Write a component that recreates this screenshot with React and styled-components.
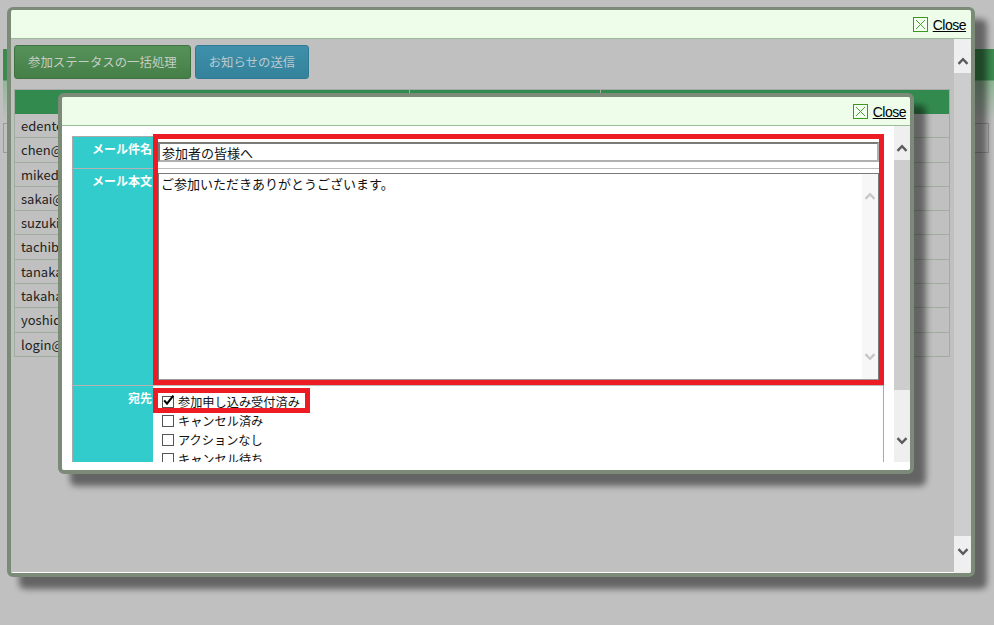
import React from 'react';
import styled, { createGlobalStyle } from 'styled-components';

const GlobalStyle = createGlobalStyle`
  html, body {
    margin: 0;
    padding: 0;
  }
  body {
    background: #c0c0c0;
    font-family: "Noto Sans CJK JP", "Noto Sans", sans-serif;
    overflow: hidden;
  }
`;

const members = [
  'edentest@example.jp',
  'chen@example.jp',
  'mikeda@example.jp',
  'sakai@example.jp',
  'suzuki@example.jp',
  'tachibana@example.jp',
  'tanaka@example.jp',
  'takahashi@example.jp',
  'yoshida@example.jp',
  'login@example.jp'
];

const recipients = [
  { label: '参加申し込み受付済み', checked: true },
  { label: 'キャンセル済み', checked: false },
  { label: 'アクションなし', checked: false },
  { label: 'キャンセル待ち', checked: false }
];

const Chevron = ({ dir, color }) => (
  <svg width="12" height="8" viewBox="0 0 12 8">
    <polyline
      points={dir === 'up' ? '1.5,6.8 6,2.2 10.5,6.8' : '1.5,1.2 6,5.8 10.5,1.2'}
      fill="none"
      stroke={color || '#5b5b5b'}
      strokeWidth="2.4"
    />
  </svg>
);

const CloseIcon = () => (
  <svg width="15" height="15" viewBox="0 0 15 15">
    <rect x="0.5" y="0.5" width="14" height="14" fill="#f3fff0" stroke="#3d981d" />
    <path d="M3 3 L12 12 M12 3 L3 12" stroke="#4ba22d" strokeWidth="1" />
  </svg>
);

const CheckMark = () => (
  <svg width="13" height="13" viewBox="0 0 13 13">
    <path d="M2.2 6.4 L5 9.6 L11.4 1.6" fill="none" stroke="#000" strokeWidth="2.1" />
  </svg>
);

const CloseLink = () => (
  <CloseWrap>
    <CloseIcon />
    <CloseText href="#close">Close</CloseText>
  </CloseWrap>
);

const Scrollbar = ({ thumb, width }) => (
  <ScrollTrack $w={width}>
    <ScrollButton $dir="up">
      <Chevron dir="up" />
    </ScrollButton>
    <ScrollThumb $h={thumb} />
    <ScrollRest>
      <ScrollButton $dir="down">
        <Chevron dir="down" />
      </ScrollButton>
    </ScrollRest>
  </ScrollTrack>
);

export default function App() {
  return (
    <>
      <GlobalStyle />
      <Screen>
        <BackPage>
          <BackBar />
          <BackField />
        </BackPage>

        <Dialog $left={7} $top={7} $w={968} $h={570} $bt={3}>
          <DialogHeader $pr={5}>
            <CloseLink />
          </DialogHeader>
          <DialogBody>
            <OuterMain>
              <Toolbar>
                <ActionButton $variant="green">参加ステータスの一括処理</ActionButton>
                <ActionButton $variant="blue">お知らせの送信</ActionButton>
              </Toolbar>
              <MemberTable>
                <HeadRow>
                  <HeadCell />
                  <HeadCell />
                  <HeadCell />
                </HeadRow>
                {members.map(m => (
                  <MemberRow key={m}>
                    <MemberCell>{m}</MemberCell>
                    <MemberCell />
                    <MemberCell />
                  </MemberRow>
                ))}
              </MemberTable>
            </OuterMain>
            <Scrollbar thumb={463} width={17} />
          </DialogBody>
        </Dialog>

        <Dialog $left={58} $top={93} $w={856} $h={381} $bt={4}>
          <DialogHeader $pr={4}>
            <CloseLink />
          </DialogHeader>
          <MailBody>
            <MailViewport>
              <MailContent>
                <FormGrid>
                  <FieldLabel $h={32}>メール件名</FieldLabel>
                  <FieldValue $h={32} $pad="5px 4px 0 5px">
                    <SubjectInput readOnly value="参加者の皆様へ" />
                  </FieldValue>

                  <FieldLabel $h={217}>メール本文</FieldLabel>
                  <FieldValue $h={217} $pad="4px 4px 4px 5px">
                    <TextBox>
                      <BodyText readOnly value="ご参加いただきありがとうございます。" />
                      <MiniBar>
                        <Chevron dir="up" color="#c8c8c8" />
                        <Chevron dir="down" color="#c8c8c8" />
                      </MiniBar>
                    </TextBox>
                  </FieldValue>

                  <FieldLabel $h={120}>宛先</FieldLabel>
                  <FieldValue $h={120} $pad="6px 0 0 9px">
                    {recipients.map(r => (
                      <CheckRow key={r.label}>
                        <CheckBox>{r.checked && <CheckMark />}</CheckBox>
                        <span>{r.label}</span>
                      </CheckRow>
                    ))}
                  </FieldValue>

                  <Highlight $left={80} $top={-3} $w={731} $h={251} />
                  <Highlight $left={80} $top={251} $w={157} $h={25} />
                </FormGrid>
              </MailContent>
              <Scrollbar thumb={230} width={16} />
            </MailViewport>
          </MailBody>
        </Dialog>
      </Screen>
    </>
  );
}

const Screen = styled.div`
  position: relative;
  width: 994px;
  height: 625px;
  overflow: hidden;
  background: #c0c0c0;
`;

const BackPage = styled.div`
  display: flex;
  flex-direction: column;
  padding: 49px 0 0 3px;
`;

const BackBar = styled.div`
  height: 72px;
  background: linear-gradient(
    #3d8a50 0,
    #3d8a50 31px,
    #8fb896 32px,
    #c0c0c0 72px
  );
`;

const BackField = styled.div`
  margin-top: 2px;
  width: 984px;
  height: 28px;
  border: 1px solid #9a9a9a;
`;

const Dialog = styled.section`
  position: absolute;
  left: ${p => p.$left}px;
  top: ${p => p.$top}px;
  width: ${p => p.$w}px;
  height: ${p => p.$h}px;
  box-sizing: border-box;
  border: 4px solid #7b8b78;
  border-top-width: ${p => p.$bt}px;
  border-radius: 6px;
  box-shadow: 12px 12px 6px rgba(0, 0, 0, 0.48);
  display: flex;
  flex-direction: column;
  overflow: hidden;
  background: #c0c0c0;
`;

const DialogHeader = styled.header`
  flex: none;
  height: 29px;
  box-sizing: border-box;
  background: #edfdea;
  border-bottom: 1px solid #9cbb9c;
  display: flex;
  justify-content: flex-end;
  align-items: center;
  padding-right: ${p => p.$pr}px;
`;

const CloseWrap = styled.div`
  display: flex;
  align-items: center;
  gap: 5px;
  margin-top: 1px;
`;

const CloseText = styled.a`
  font-family: "Liberation Sans", Arial, sans-serif;
  font-size: 14px;
  letter-spacing: -0.5px;
  color: #000;
  text-decoration: underline;
`;

const DialogBody = styled.div`
  flex: 1;
  display: flex;
  min-height: 0;
`;

const OuterMain = styled.div`
  flex: 1;
  min-width: 0;
  overflow: hidden;
  padding: 6px 4px 0 3px;
  border-bottom: 1px solid #fff;
`;

const Toolbar = styled.div`
  display: flex;
  gap: 4px;
`;

const ActionButton = styled.button`
  height: 34px;
  padding: 0 13px;
  border-radius: 3px;
  font-family: "Noto Sans CJK JP", sans-serif;
  font-size: 12.4px;
  cursor: pointer;
  border: 1px solid ${p => (p.$variant === 'green' ? '#3e723f' : '#2f7a93')};
  background: ${p =>
    p.$variant === 'green'
      ? 'linear-gradient(#55925a, #467f48)'
      : 'linear-gradient(#3e90aa, #34829c)'};
  color: ${p => (p.$variant === 'green' ? '#c6cdc5' : '#b9c9d0')};
`;

const MemberTable = styled.div`
  margin-top: 10px;
  border-left: 1px solid #9fae9c;
  border-right: 1px solid #9fae9c;
`;

const HeadRow = styled.div`
  display: grid;
  grid-template-columns: 394px 191px 1fr;
  height: 24px;
  border-top: 1px solid #a8a8a8;
  background: #338a4f;
`;

const HeadCell = styled.div`
  & + & {
    border-left: 1px solid #a8a8a8;
  }
`;

const MemberRow = styled.div`
  display: grid;
  grid-template-columns: 394px 191px 1fr;
  height: 24.3px;
  box-sizing: border-box;
  border-bottom: 1px solid #9fae9c;
`;

const MemberCell = styled.div`
  padding-left: 6px;
  font-size: 13px;
  line-height: 23px;
  color: #222;
  white-space: nowrap;
  overflow: hidden;
  & + & {
    border-left: 1px solid #9fae9c;
  }
`;

const ScrollTrack = styled.div`
  flex: none;
  width: ${p => p.$w}px;
  display: flex;
  flex-direction: column;
  background: #efefef;
`;

const ScrollButton = styled.div`
  height: 34px;
  box-sizing: border-box;
  display: flex;
  justify-content: center;
  align-items: ${p => (p.$dir === 'up' ? 'flex-end' : 'flex-start')};
  padding: ${p => (p.$dir === 'up' ? '0 0 8px' : '9px 0 0')};
`;

const ScrollThumb = styled.div`
  height: ${p => p.$h}px;
  background: #cdcdcd;
`;

const ScrollRest = styled.div`
  flex: 1;
  display: flex;
  flex-direction: column;
  justify-content: flex-end;
`;

const MailBody = styled.div`
  flex: 1;
  min-height: 0;
  background: #fff;
  padding: 0 0 8px 10px;
  display: flex;
`;

const MailViewport = styled.div`
  flex: 1;
  display: flex;
  min-height: 0;
  overflow: hidden;
`;

const MailContent = styled.div`
  flex: 1;
  min-width: 0;
  overflow: hidden;
  padding-top: 10px;
`;

const FormGrid = styled.div`
  position: relative;
  width: 812px;
  box-sizing: border-box;
  display: grid;
  grid-template-columns: 80px 1fr;
  border-top: 1px solid #aaa;
  border-left: 1px solid #aaa;
  border-right: 1px solid #aaa;
`;

const FieldLabel = styled.div`
  height: ${p => p.$h}px;
  box-sizing: border-box;
  background: #33cccc;
  border-bottom: 1px solid #b4b4b4;
  color: #fff;
  font-weight: bold;
  font-size: 12px;
  line-height: 16px;
  text-align: right;
  padding: 4px 1px 0 0;
`;

const FieldValue = styled.div`
  height: ${p => p.$h}px;
  box-sizing: border-box;
  border-bottom: 1px solid #bdbdbd;
  padding: ${p => p.$pad};
`;

const SubjectInput = styled.input`
  display: block;
  width: 100%;
  height: 20px;
  box-sizing: border-box;
  margin: 0;
  padding: 0 2px;
  border: 2px solid;
  border-color: #7a7a7a #b0b0b0 #b0b0b0 #7a7a7a;
  font-family: "Noto Sans CJK JP", sans-serif;
  font-size: 13px;
  color: #111;
  outline: none;
`;

const TextBox = styled.div`
  height: 100%;
  box-sizing: border-box;
  display: flex;
  border: 1px solid #7a7a7a;
  border-bottom: 2px solid #9a9a9a;
`;

const BodyText = styled.textarea`
  flex: 1;
  border: none;
  resize: none;
  outline: none;
  margin: 0;
  padding: 1px 2px;
  font-family: "Noto Sans CJK JP", sans-serif;
  font-size: 13px;
  line-height: 18px;
  color: #111;
  overflow: hidden;
`;

const MiniBar = styled.div`
  width: 16px;
  background: #f7f7f7;
  display: flex;
  flex-direction: column;
  justify-content: space-between;
  align-items: center;
  padding: 18px 0 18px;
`;

const CheckRow = styled.label`
  display: flex;
  align-items: center;
  gap: 4px;
  height: 19px;
  font-size: 12.2px;
  color: #111;
`;

const CheckBox = styled.span`
  flex: none;
  width: 12px;
  height: 12px;
  box-sizing: border-box;
  border: 1px solid #555;
  background: #fff;
  display: flex;
  align-items: center;
  justify-content: center;
  overflow: visible;
  svg {
    flex: none;
    margin: -2px 0 0 1px;
  }
`;

const Highlight = styled.div`
  position: absolute;
  left: ${p => p.$left}px;
  top: ${p => p.$top}px;
  width: ${p => p.$w}px;
  height: ${p => p.$h}px;
  box-sizing: border-box;
  border: 5px solid #ed1c24;
  pointer-events: none;
`;
